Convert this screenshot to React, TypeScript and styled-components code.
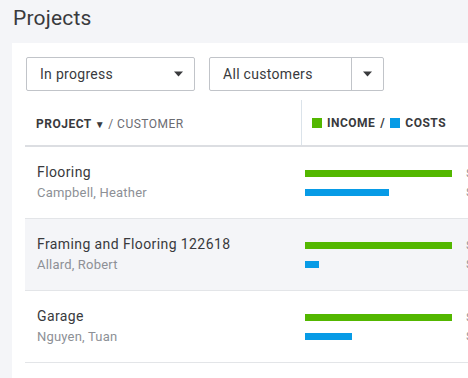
import styled, { createGlobalStyle } from "styled-components";

const GlobalStyle = createGlobalStyle`
  html, body { margin: 0; padding: 0; background: #f4f5f8; overflow: hidden; }
  body { font-family: Roboto, "Liberation Sans", sans-serif; color: #393a3d; }
`;

type Project = {
  name: string;
  customer: string;
  income: number;
  costs: number;
  incomeText: string;
  costsText: string;
};

const projects: Project[] = [
  { name: "Flooring", customer: "Campbell, Heather", income: 147, costs: 84, incomeText: "$8,350.00", costsText: "$4,760.00" },
  { name: "Framing and Flooring 122618", customer: "Allard, Robert", income: 147, costs: 14, incomeText: "$6,200.00", costsText: "$600.00" },
  { name: "Garage", customer: "Nguyen, Tuan", income: 147, costs: 47, incomeText: "$12,500.00", costsText: "$4,000.00" },
];

const Caret = () => (
  <svg width="9" height="6" viewBox="0 0 9 6">
    <path d="M0 0.5h9L4.5 5.5z" fill="#393a3d" />
  </svg>
);

const App: React.FC = () => {
  return (
    <>
      <GlobalStyle />
      <StyledPage>
        <StyledTitle>Projects</StyledTitle>
        <StyledCard>
          <StyledFilters>
            <StyledSelect $width={169}>
              <span>In progress</span>
              <StyledCaretBox>
                <Caret />
              </StyledCaretBox>
            </StyledSelect>
            <StyledSelect $width={175}>
              <span>All customers</span>
              <StyledCaretBox $divider>
                <Caret />
              </StyledCaretBox>
            </StyledSelect>
          </StyledFilters>
          <StyledTable>
            <StyledHeader>
              <StyledHeadCell>
                <b>PROJECT</b>
                <StyledSortArrow>▼</StyledSortArrow>
                <span>/ CUSTOMER</span>
              </StyledHeadCell>
              <StyledHeadCell $bars>
                <StyledSwatch $color="#53b700" />
                <b>INCOME</b>
                <StyledSlash>/</StyledSlash>
                <StyledSwatch $color="#079be6" />
                <b>COSTS</b>
              </StyledHeadCell>
            </StyledHeader>
            {projects.map((p, i) => (
              <StyledRow key={p.name} $alt={i === 1}>
                <StyledNameCell>
                  <StyledName>{p.name}</StyledName>
                  <StyledCustomer>{p.customer}</StyledCustomer>
                </StyledNameCell>
                <StyledBarCell>
                  <StyledBarLine>
                    <StyledTrack>
                      <StyledBar $color="#53b700" style={{ width: p.income }} />
                    </StyledTrack>
                    <StyledAmount>{p.incomeText}</StyledAmount>
                  </StyledBarLine>
                  <StyledBarLine>
                    <StyledTrack>
                      <StyledBar $color="#079be6" style={{ width: p.costs }} />
                    </StyledTrack>
                    <StyledAmount>{p.costsText}</StyledAmount>
                  </StyledBarLine>
                </StyledBarCell>
              </StyledRow>
            ))}
          </StyledTable>
        </StyledCard>
      </StyledPage>
    </>
  );
};

const StyledPage = styled.div`
  display: flex; flex-direction: column; padding-left: 12px; width: 456px; height: 378px;
`;

const StyledTitle = styled.h1`
  margin: 0; height: 43px; padding: 5px 0 0 1px; box-sizing: border-box;
  font-size: 21px; line-height: 26px; font-weight: 400; color: #393a3d; letter-spacing: 0.2px;
`;

const StyledCard = styled.div`
  flex: 1; background: #fff; padding: 14px 0 0 13px; display: flex; flex-direction: column;
  min-width: 0; overflow: hidden;
`;

const StyledFilters = styled.div`
  display: flex; gap: 14px; padding-left: 1px;
`;

const StyledSelect = styled.div<{ $width: number }>`
  width: ${p => p.$width}px; height: 34px; box-sizing: border-box;
  border: 1px solid #c1c4c9; border-radius: 2px; display: flex; align-items: center;
  font-size: 14px; color: #393a3d; letter-spacing: 0.3px;
  span { flex: 1; padding-left: 13px; }
`;

const StyledCaretBox = styled.div<{ $divider?: boolean }>`
  width: 31px; height: 100%; display: flex; align-items: center; justify-content: center;
  border-left: ${p => (p.$divider ? "1px solid #c1c4c9" : "none")};
`;

const StyledTable = styled.div`
  margin-top: 9px; display: flex; flex-direction: column; width: 600px;
`;

const StyledHeader = styled.div`
  display: flex; height: 45px; border-bottom: 2px solid #dcdee2;
`;

const StyledHeadCell = styled.div<{ $bars?: boolean }>`
  display: flex; align-items: center; font-size: 12px; color: #6b6c72; letter-spacing: 0.5px;
  width: ${p => (p.$bars ? "auto" : "276px")}; flex: ${p => (p.$bars ? 1 : "none")};
  padding-left: ${p => (p.$bars ? "10px" : "11px")}; box-sizing: border-box;
  border-left: ${p => (p.$bars ? "1px solid #dbe3ea" : "none")};
  padding-top: ${p => (p.$bars ? "0" : "3px")};
  b { font-weight: 700; color: #393a3d; }
`;

const StyledSortArrow = styled.span`
  font-size: 10px; color: #393a3d; margin: 0 3px 0 3px;
`;

const StyledSlash = styled.span`
  font-weight: 700; color: #393a3d; margin: 0 5px;
`;

const StyledSwatch = styled.span<{ $color: string }>`
  width: 10px; height: 10px; background: ${p => p.$color}; margin-right: 5px;
`;

const StyledRow = styled.div<{ $alt?: boolean }>`
  display: flex; height: 72px; box-sizing: border-box; border-bottom: 1px solid #e3e5e8;
  background: ${p => (p.$alt ? "#f4f5f8" : "#fff")};
`;

const StyledNameCell = styled.div`
  width: 276px; padding: 15px 0 0 12px; box-sizing: border-box;
`;

const StyledName = styled.div`
  font-size: 14px; line-height: 20px; color: #393a3d; letter-spacing: 0.4px;
`;

const StyledCustomer = styled.div`
  font-size: 13px; line-height: 18px; margin-top: 2px; color: #8d9096; letter-spacing: 0.2px;
`;

const StyledBarCell = styled.div`
  flex: 1; padding: 23px 0 0 4px; display: flex; flex-direction: column; gap: 12px;
`;

const StyledBarLine = styled.div`
  display: flex; align-items: center; height: 7px;
`;

const StyledTrack = styled.div`
  width: 161px; height: 7px;
`;

const StyledBar = styled.div<{ $color: string }>`
  height: 7px; background: ${p => p.$color};
`;

const StyledAmount = styled.span`
  font-size: 11px; color: #8d9096; white-space: nowrap;
`;

export default App;
